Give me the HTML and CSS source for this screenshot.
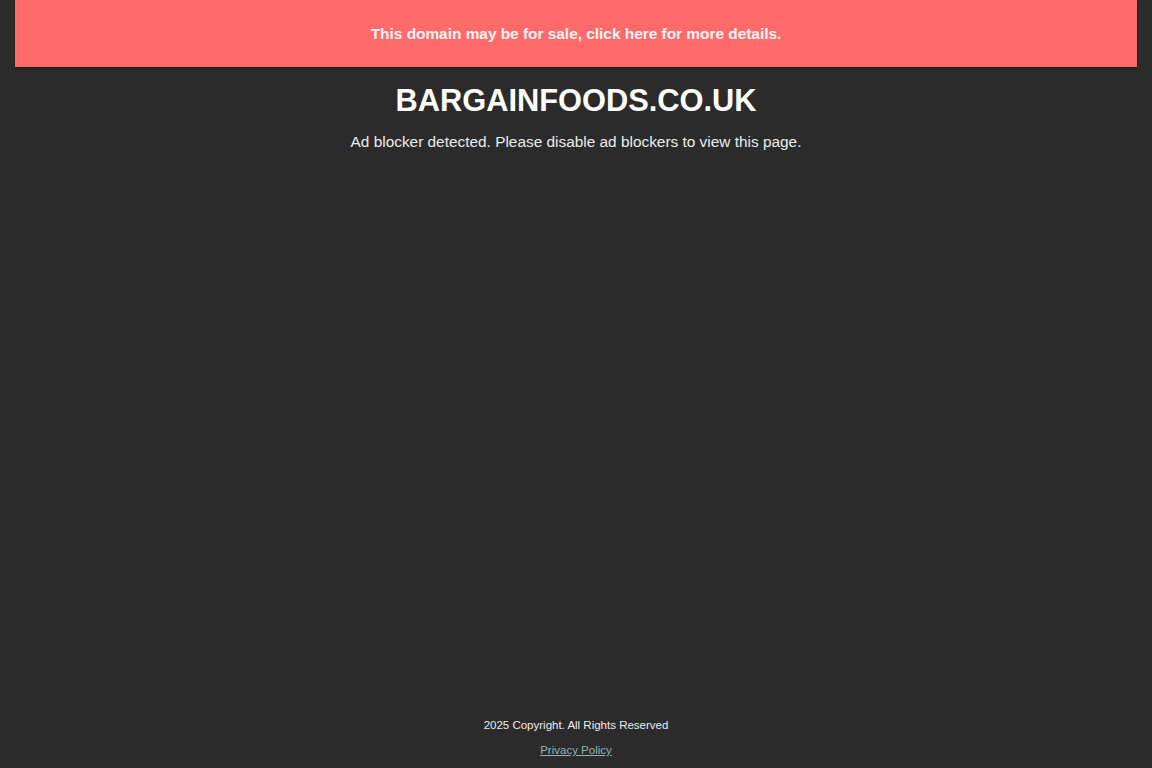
FILE: index.html
```html
<!DOCTYPE html>
<html lang="en">
<head>
<meta charset="utf-8">
<title>bargainfoods.co.uk</title>
<link rel="stylesheet" href="styles.css">
</head>
<body>
<div class="page">
  <a class="banner" href="#">This domain may be for sale, click here for more details.</a>
  <main class="main">
    <h1 class="title">BARGAINFOODS.CO.UK</h1>
    <p class="notice">Ad blocker detected. Please disable ad blockers to view this page.</p>
  </main>
  <footer class="footer">
    <p class="copy">2025 Copyright. All Rights Reserved</p>
    <a class="privacy" href="#">Privacy Policy</a>
  </footer>
</div>
</body>
</html>
```

FILE: styles.css
```css
html, body {
  margin: 0;
  padding: 0;
  background: #2b2b2b;
  color: #ffffff;
  font-family: "Liberation Sans", Arial, sans-serif;
}
.page {
  min-height: 100vh;
  display: flex;
  flex-direction: column;
  box-sizing: border-box;
}
.banner {
  display: block;
  margin: 0 15px;
  padding: 24px 0;
  line-height: 19px;
  background: #ff6b6b;
  color: #fff3f3;
  font-weight: bold;
  font-size: 15.4px;
  text-align: center;
  text-decoration: none;
  box-shadow: 0 1px 2px rgba(0,0,0,0.45);
}
.main {
  text-align: center;
}
.title {
  margin: 15px 0 0;
  font-size: 30.8px;
  line-height: 37px;
  font-weight: bold;
}
.notice {
  margin: 14px 0 0;
  font-size: 15.4px;
  line-height: 18px;
  color: #ececec;
}
.footer {
  margin-top: auto;
  padding-bottom: 11px;
  text-align: center;
  font-size: 11.5px;
  line-height: 14px;
}
.copy {
  margin: 0 0 11px;
  color: #ececec;
}
.privacy {
  color: #8fb3b3;
  text-decoration: underline;
}
```
